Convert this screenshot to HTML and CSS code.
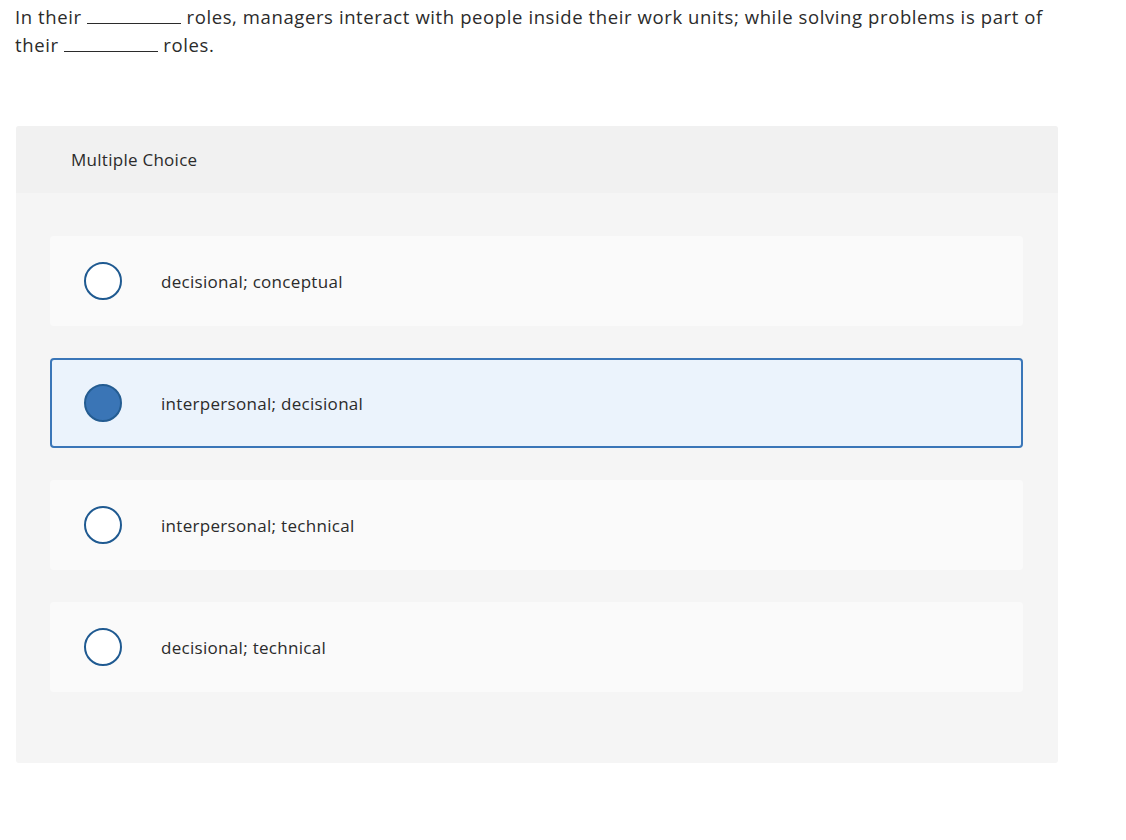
FILE: index.html
```html
<!DOCTYPE html>
<html lang="en">

<head>
    <meta charset="UTF-8">
    <meta name="viewport" content="width=device-width, initial-scale=1.0">
    <title>Multiple Choice</title>

    <link rel="stylesheet" href="styles.css">
</head>

<body>
    <div class="page">
        <p class="question">
            In their <span class="blank"></span> roles, managers interact with people inside their work units; while solving problems is part of<br>
            their <span class="blank"></span> roles.
        </p>

        <div class="panel">
            <div class="panelHead">Multiple Choice</div>

            <div class="choices">
                <div class="choice">
                    <span class="radio"></span>
                    <span class="label">decisional; conceptual</span>
                </div>
                <div class="choice selected">
                    <span class="radio"></span>
                    <span class="label">interpersonal; decisional</span>
                </div>
                <div class="choice">
                    <span class="radio"></span>
                    <span class="label">interpersonal; technical</span>
                </div>
                <div class="choice">
                    <span class="radio"></span>
                    <span class="label">decisional; technical</span>
                </div>
            </div>
        </div>
    </div>
</body>

</html>
```

FILE: styles.css
```css
body {
    margin: 0;
    font-family: "Open Sans", "Noto Sans", sans-serif;
    color: #2b2b2b;
    background-color: #fff;
}

.page {
    width: 1042px;
    padding: 0 0 0 16px;
}

.question {
    margin: 0 0 0 -1px;
    padding-top: 3px;
    font-size: 18.5px;
    letter-spacing: 0.6px;
    line-height: 28px;
}

.blank {
    display: inline-block;
    width: 94px;
    border-bottom: 1px solid #2b2b2b;
    vertical-align: baseline;
}

.panel {
    margin-top: 67px;
    background-color: #f5f5f5;
    border-radius: 3px;
}

.panelHead {
    height: 67px;
    padding-left: 55px;
    display: flex;
    align-items: center;
    background-color: #f1f1f1;
    border-radius: 3px 3px 0 0;
    font-size: 17px;
    letter-spacing: 0.27px;
}

.choices {
    padding: 43px 35px 71px 34px;
    display: flex;
    flex-direction: column;
    gap: 32px;
}

.choice {
    box-sizing: border-box;
    height: 90px;
    padding-left: 32px;
    display: flex;
    align-items: center;
    gap: 39px;
    background-color: #fafafa;
    border: 2px solid transparent;
    border-radius: 4px;
    font-size: 17px;
    letter-spacing: 0.3px;
}

.choice.selected {
    background-color: #ebf3fc;
    border-color: #3a76b8;
}

.radio {
    box-sizing: border-box;
    width: 38px;
    height: 38px;
    border: 2px solid #1f5a91;
    border-radius: 50%;
    background-color: #fff;
    flex-shrink: 0;
}

.selected .radio {
    background-color: #3a75b6;
    border-color: #245c91;
}
```
